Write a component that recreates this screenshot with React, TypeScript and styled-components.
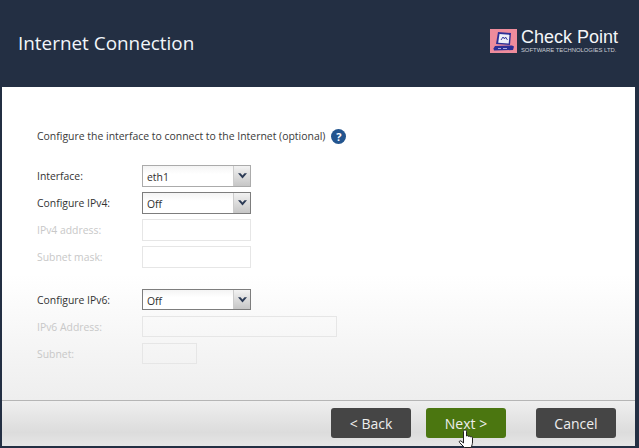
import styled, { createGlobalStyle } from 'styled-components';

const GlobalStyle = createGlobalStyle`
  html, body {
    margin: 0;
    padding: 0;
    width: 639px;
    height: 448px;
    overflow: hidden;
    background: #232f43;
  }
  * {
    box-sizing: border-box;
  }
`;

const Window = styled.div`
  width: 639px;
  height: 448px;
  display: flex;
  flex-direction: column;
  background: #232f43;
  padding: 0 4px 2px 2px;
  font-family: "Open Sans", "Noto Sans", sans-serif;
  position: relative;
`;

const Header = styled.header`
  height: 87px;
  flex: none;
  display: flex;
  align-items: center;
  justify-content: space-between;
  padding: 0 17px 5px 16px;
`;

const Title = styled.h1`
  margin: 0 0 -3px 0;
  font-size: 18.9px;
  font-weight: 400;
  color: #f2f6fa;
`;

const Logo = styled.div`
  display: flex;
  align-items: center;
  gap: 4px;
`;

const LogoText = styled.div`
  display: flex;
  flex-direction: column;
  font-family: "Liberation Sans", sans-serif;
  color: #f4f6f8;
`;

const LogoName = styled.span`
  font-size: 18px;
  line-height: 17px;
`;

const LogoTag = styled.span`
  font-size: 5.9px;
  line-height: 8px;
  color: #c9ced6;
  white-space: nowrap;
`;

const Content = styled.main`
  flex: 1;
  padding: 40px 0 0 35px;
  background: linear-gradient(#ffffff 0%, #ffffff 60%, #eeeeee 100%);
`;

const Intro = styled.div`
  display: flex;
  align-items: center;
  gap: 6px;
  height: 18px;
  font-size: 10.45px;
  color: #3a3a3a;
  margin-bottom: 20px;
`;

const HelpBadge = styled.span`
  width: 15px;
  height: 15px;
  border-radius: 50%;
  background: #23558f;
  color: #fff;
  font-size: 11px;
  font-weight: 700;
  display: flex;
  align-items: center;
  justify-content: center;
`;

const Form = styled.div`
  display: flex;
  flex-direction: column;
  gap: 5.5px;
`;

const Row = styled.div<{ $spaced?: boolean }>`
  display: grid;
  grid-template-columns: 105px auto;
  justify-content: start;
  align-items: center;
  height: 21.5px;
  margin-top: ${p => (p.$spaced ? '15.500px' : '0')};
`;

const Label = styled.label<{ $disabled?: boolean }>`
  padding-top: 1px;
  font-size: 10.4px;
  color: ${p => (p.$disabled ? '#c8c8c8' : '#333333')};
`;

const SelectBox = styled.div<{ $strong?: boolean }>`
  width: 109px;
  height: 21.5px;
  display: flex;
  border: 1px solid ${p => (p.$strong ? '#7d7d7d' : '#ababab')};
  background: linear-gradient(#f4f4f4, #ffffff 40%);
`;

const SelectValue = styled.span`
  flex: 1;
  padding: 1px 0 0 4px;
  font-size: 10.4px;
  line-height: 20px;
  color: #2f2f2f;
`;

const SelectArrow = styled.span`
  width: 17px;
  display: flex;
  align-items: center;
  justify-content: center;
  background: linear-gradient(#f2f2f2, #c6c6c6);
  border-left: 1px solid #cccccc;
`;

const TextInput = styled.div<{ $width: number }>`
  width: ${p => p.$width}px;
  height: 21.5px;
  border: 1px solid #e6e6e6;
  background: transparent;
`;

const Footer = styled.footer`
  height: 46px;
  flex: none;
  display: flex;
  justify-content: flex-end;
  align-items: flex-start;
  padding: 7px 19px 0 0;
  border-top: 1px solid #b5b5b5;
  background: linear-gradient(#efefef, #dcdcdc 70%, #e6e6e6);
`;

const Button = styled.button<{ $primary?: boolean; $gap: number }>`
  width: 80px;
  height: 30px;
  margin-left: ${p => p.$gap}px;
  border: none;
  border-radius: 3px;
  padding: 0;
  font-family: inherit;
  font-size: 14px;
  color: #eeeeee;
  background: ${p => (p.$primary ? '#4b7610' : '#454545')};
`;

const Cursor = styled.svg`
  position: absolute;
  left: 458px;
  top: 429px;
`;

const Chevron = () => (
  <svg width="11" height="7" viewBox="0 0 11 7">
    <path d="M1 1.200h2.500L5.500 3.500 7.500 1.200H10L5.500 6.500z" fill="#2b3a55" />
  </svg>
);

const Select = ({ value, strong }: { value: string; strong?: boolean }) => (
  <SelectBox $strong={strong}>
    <SelectValue>{value}</SelectValue>
    <SelectArrow>
      <Chevron />
    </SelectArrow>
  </SelectBox>
);

export default function App() {
  return (
    <>
      <GlobalStyle />
      <Window>
        <Header>
          <Title>Internet Connection</Title>
          <Logo>
            <svg width="27" height="24" viewBox="0 0 27 24">
              <rect width="27" height="24" fill="#ee8c9c" />
              <path d="M8 3l13 1-1 12-14-1z" fill="#2c2f96" />
              <path d="M9.500 5l10 .8-.8 8.700-10.500-.8z" fill="#eef0f8" />
              <path d="M11 11l2-3 1.500 2 1-2 2 3" stroke="#2c2f96" strokeWidth="0.9" fill="none" />
              <path d="M5 17l17-.5 2 1-1 3.500-19 .5-.5-2z" fill="#2c2f96" />
              <path d="M8 19.500h3M13 19.500h4" stroke="#c9c9ee" strokeWidth="0.8" />
            </svg>
            <LogoText>
              <LogoName>Check Point</LogoName>
              <LogoTag>SOFTWARE TECHNOLOGIES LTD.</LogoTag>
            </LogoText>
          </Logo>
        </Header>
        <Content>
          <Intro>
            Configure the interface to connect to the Internet (optional)
            <HelpBadge>?</HelpBadge>
          </Intro>
          <Form>
            <Row>
              <Label>Interface:</Label>
              <Select value="eth1" />
            </Row>
            <Row>
              <Label>Configure IPv4:</Label>
              <Select value="Off" strong />
            </Row>
            <Row>
              <Label $disabled>IPv4 address:</Label>
              <TextInput $width={109} />
            </Row>
            <Row>
              <Label $disabled>Subnet mask:</Label>
              <TextInput $width={109} />
            </Row>
            <Row $spaced>
              <Label>Configure IPv6:</Label>
              <Select value="Off" strong />
            </Row>
            <Row>
              <Label $disabled>IPv6 Address:</Label>
              <TextInput $width={195} />
            </Row>
            <Row>
              <Label $disabled>Subnet:</Label>
              <TextInput $width={55} />
            </Row>
          </Form>
        </Content>
        <Footer>
          <Button $gap={0}>&lt; Back</Button>
          <Button $gap={15} $primary>Next &gt;</Button>
          <Button $gap={30}>Cancel</Button>
        </Footer>
        <Cursor width="18" height="19" viewBox="0 0 18 19">
          <path
            d="M7 1c1 0 1.500.6 1.500 1.500V7c.8-.6 1.800-.4 2 .4.8-.5 1.700-.3 2 .5.8-.4 2-.1 2 1V13c0 2-.6 3.500-1.500 5.500H6.500L1.500 13.500c-.8-1 .4-2.200 1.500-1.500L5.500 14V2.500C5.500 1.600 6 1 7 1z"
            fill="#fff"
            stroke="#222"
            strokeWidth="1"
          />
        </Cursor>
      </Window>
    </>
  );
}
